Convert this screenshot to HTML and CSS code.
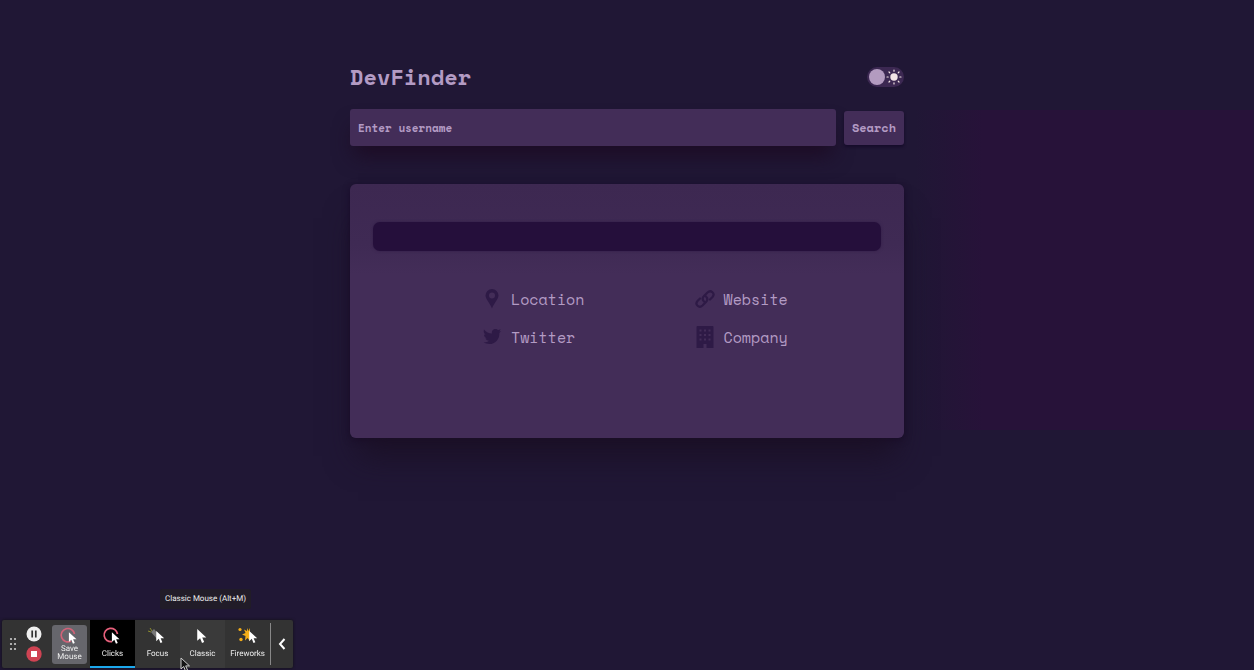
FILE: index.html
```html
<!DOCTYPE html>
<html lang="en">
<head>
<meta charset="utf-8">
<meta name="viewport" content="width=device-width, initial-scale=1">
<title>DevFinder</title>
<link rel="stylesheet" href="styles.css">
</head>
<body>
<svg class="defs" aria-hidden="true">
  <symbol id="arrow" viewBox="0 0 10 15"><path d="M1 1v11l2.700-2.500L5.500 14l2-.9-1.800-4.200H9.500z"/></symbol>
</svg>
<main class="finder">
  <header class="header">
    <h1 class="title">DevFinder</h1>
    <label class="theme">
      <input class="theme-input" type="checkbox" aria-label="Light theme">
      <svg class="sun" viewBox="0 0 16 16" aria-hidden="true"><circle cx="8" cy="8" r="3.700" fill="#f3e5e6"/><path d="M8 1v1.200M8 13.800V15M1 8h1.200M13.800 8H15M3 3l.8.8M12.200 12.200l.8.8M13 3l-.8.8M3.800 12.200l-.8.8" stroke="#f3e5e6" stroke-width="1.200" stroke-linecap="round"/></svg>
    </label>
  </header>
  <form class="search">
    <input class="search-input" type="text" placeholder="Enter username" aria-label="Enter username">
    <button class="search-button" type="button">Search</button>
  </form>
  <section class="card">
    <div class="stats"></div>
    <ul class="details">
      <li class="detail"><svg class="icon" viewBox="0 0 20 24" aria-hidden="true"><path fill-rule="evenodd" d="M10 2a6.500 6.500 0 0 0-6.500 6.500C3.500 12 8 16 10 21.500 12 16 16.500 12 16.500 8.500A6.500 6.500 0 0 0 10 2zm0 3.500a3 3 0 1 1 0 6 3 3 0 0 1 0-6z"/></svg>Location</li>
      <li class="detail"><svg class="icon" viewBox="0 0 20 24" aria-hidden="true"><g fill="none" stroke="#2e1a46" stroke-width="2.200" stroke-linecap="round"><path d="M9 14.500c-2-2-1.500-4 0-5.500l3.500-3.500c3.500-3.200 8 1 5 4.500L15 12.500"/><path d="M11 9.500c2 2 1.500 4 0 5.500l-3.500 3.500c-3.500 3.200-8-1-5-4.500L5 11.500"/></g></svg>Website</li>
      <li class="detail"><svg class="icon" viewBox="0 0 20 24" aria-hidden="true"><path d="M2 4.500c2.200 2.600 4.800 3.900 8 4.100-.6-2.700 1.200-4.600 3.500-4.600 1 0 2 .5 2.700 1.100L18.700 4.200l-1.400 2.200 1.800-.4-1.700 1.900c.3 6.500-4.400 11.100-9.900 11.100-2.300 0-4.300-.6-5.900-1.700 2 .2 3.900-.3 5.300-1.500-1.700-.1-2.900-1.100-3.400-2.600h1.500C3.200 12.700 2 11.300 2 9.400l1.600.4C2.100 8.600 1.200 6.500 2 4.500z"/></svg>Twitter</li>
      <li class="detail"><svg class="icon" viewBox="0 0 20 24" aria-hidden="true"><path d="M2.500 1h15q1 0 1 1v21h-7v-4h-3v4h-7V2q0-1 1-1z"/><path d="M4.500 5.500h2M9 5.500h2M13.500 5.500h2M4.500 10h2M9 10h2M13.500 10h2M4.500 14.500h2M9 14.500h2M13.500 14.500h2" stroke="#432d58" stroke-width="1.800"/></svg>Company</li>
    </ul>
  </section>
</main>

<aside class="recorder" aria-label="Recorder">
  <div class="tooltip" role="tooltip">Classic Mouse (Alt+M)</div>
  <svg class="grip" viewBox="0 0 8 14" fill="#ccc" aria-hidden="true"><circle cx="2" cy="2" r="1.100"/><circle cx="6" cy="2" r="1.100"/><circle cx="2" cy="7" r="1.100"/><circle cx="6" cy="7" r="1.100"/><circle cx="2" cy="12" r="1.100"/><circle cx="6" cy="12" r="1.100"/></svg>
  <div class="controls">
    <button class="control" type="button" aria-label="Pause"><svg viewBox="0 0 16 16"><circle cx="8" cy="8" r="7.500" fill="#f0f0f0"/><path d="M6.200 4.500v7M9.800 4.500v7" stroke="#333" stroke-width="1.700"/></svg></button>
    <button class="control" type="button" aria-label="Stop"><svg viewBox="0 0 16 16"><circle cx="8" cy="8" r="7.700" fill="#cf4353"/><path d="M5 5h6v6H5z" fill="#fff"/></svg></button>
  </div>
  <button class="save" type="button"><svg class="tool-icon" viewBox="0 0 22 18" aria-hidden="true"><path d="M12 14.100A6.700 6.700 0 1 1 15.500 7" fill="none" stroke="#d16278" stroke-width="1.600"/><use href="#arrow" x="9" y="4" width="9" height="14" fill="#fff"/></svg><span>Save Mouse</span></button>
  <button class="tool tool-active" type="button"><svg class="tool-icon" viewBox="0 0 22 18" aria-hidden="true"><path d="M10 14.600A6.700 6.700 0 1 1 15.500 7" fill="none" stroke="#e8607c" stroke-width="1.700"/><use href="#arrow" x="9" y="4" width="9" height="14" fill="#fff"/></svg>Clicks</button>
  <button class="tool" type="button"><svg class="tool-icon" viewBox="0 0 22 18" aria-hidden="true"><path d="M3 1l2 3M1 4l3 1" stroke="#8c8c2e"/><path d="M4 5l3-3 6 7-3 3z" fill="#777"/><use href="#arrow" x="8" y="3" width="10" height="14" fill="#fff"/></svg>Focus</button>
  <button class="tool tool-hover" type="button"><svg class="tool-icon" viewBox="0 0 22 18" aria-hidden="true"><use href="#arrow" x="4" y="1" width="11" height="16" fill="#fff"/></svg>Classic</button>
  <button class="tool" type="button"><svg class="tool-icon" viewBox="0 0 22 18" aria-hidden="true"><path d="M10 1l1.500 3L13 1v13l-2.500-3L8 13.500 8.500 9 5 7.500 8.500 6 7 2.500l3 1.500z" fill="#f4ae18"/><g fill="#f4ae18"><circle cx="3" cy="2.500" r="1.600"/><circle cx="4" cy="12.500" r="1.700"/></g><use href="#arrow" x="11" y="3" width="10" height="14" fill="#fff"/></svg>Fireworks</button>
  <button class="collapse" type="button" aria-label="Collapse"><svg viewBox="0 0 10 14"><path d="M7.500 2L3 7l4.500 5" fill="none" stroke="#fff" stroke-width="2"/></svg></button>
  <svg class="pointer" viewBox="0 0 10 15" aria-hidden="true"><use href="#arrow" width="10" height="15" fill="#151515" stroke="#ccc"/></svg>
</aside>
</body>
</html>
```

FILE: styles.css
```css
* { box-sizing: border-box; }

body {
  margin: 0;
  min-height: 100vh;
  padding: 60px 24px 100px;
  color: #b39bc4;
  background: #201735 linear-gradient(90deg, transparent, #271239 20%) right 110px / 27% 320px no-repeat;
  font-family: "Space Mono", "DejaVu Sans Mono", monospace;
}

button, input { font: inherit; color: inherit; }

button {
  border: 0;
  padding: 0;
  background: none;
}

svg { display: block; }

.defs {
  position: absolute;
  width: 0;
  height: 0;
}

.finder {
  max-width: 554px;
  margin: 0 auto;
}

.header {
  display: flex;
  align-items: center;
  justify-content: space-between;
}

.title {
  margin: 0;
  font-size: 22px;
  line-height: 34px;
}

.theme {
  display: flex;
  align-items: center;
  gap: 1px;
  padding: 2px;
  border-radius: 10px;
  background: #3c2852;
}

.theme-input {
  appearance: none;
  width: 16px;
  height: 16px;
  margin: 0;
  border-radius: 50%;
  background: #b39bc0;
}

.sun {
  width: 16px;
  height: 16px;
}

.search {
  display: flex;
  align-items: center;
  gap: 8px;
  margin-top: 15px;
  font-size: 12px;
  font-weight: 700;
}

.search-input {
  flex: 1;
  min-width: 0;
  height: 37px;
  padding: 0 8px;
  border: 0;
  border-radius: 3px;
  background: #432d58;
  box-shadow: 0 14px 20px -4px #1d0c25;
  font-size: 11px;
}

.search-input::placeholder {
  color: #b39bc4;
  opacity: 1;
}

.search-button {
  height: 34px;
  padding: 0 8px;
  border-radius: 3px;
  background: #432d58;
  box-shadow: 0 2px 3px #150b2a;
}

.card {
  margin-top: 38px;
  padding: 38px 23px 89px;
  border-radius: 6px;
  background: linear-gradient(#3d2851, #3f2a54 60px, #432d58 90px);
  box-shadow: 0 26px 30px -8px #1b1026, 0 2px 7px #180b2a;
}

.stats {
  height: 29px;
  border-radius: 7px;
  background: #250f3b;
  box-shadow: 0 0 3px #321d47;
}

.details {
  display: grid;
  grid-template-columns: 1fr 1fr;
  row-gap: 14px;
  margin: 36px 0 0;
  padding: 0 0 0 109px;
  list-style: none;
  font-size: 15px;
  line-height: 24px;
}

.detail {
  display: flex;
  align-items: center;
  gap: 9px;
}

.detail:nth-child(even) { padding-left: 13px; }

.icon {
  width: 20px;
  height: 24px;
  fill: #2e1a46;
}

.recorder {
  position: fixed;
  left: 2px;
  bottom: 2px;
  display: flex;
  align-items: center;
  height: 48px;
  border-radius: 2px;
  background: #333;
  box-shadow: 0 0 3px #111;
  color: #eee;
  font-family: Roboto, sans-serif;
  font-size: 8px;
  line-height: 8px;
  text-rendering: geometricPrecision;
}

.recorder button { text-rendering: inherit; }

.grip {
  width: 8px;
  height: 14px;
  margin: 0 9px 0 7px;
}

.controls {
  display: grid;
  gap: 4px;
  margin-right: 10px;
}

.control {
  width: 16px;
  height: 16px;
}

.save {
  display: flex;
  flex-direction: column;
  align-items: center;
  width: 35px;
  height: 39px;
  margin-right: 3px;
  padding-top: 2px;
  border-radius: 3px;
  background: #66666c;
}

.tool-icon {
  width: 22px;
  height: 18px;
}

.tool {
  display: flex;
  flex-direction: column;
  align-items: center;
  gap: 5px;
  width: 45px;
  height: 48px;
  padding-top: 7px;
  border-bottom: 2px solid transparent;
}

.tool-active {
  border-color: #1ca8ed;
  background: #000;
}

.tool-hover { background: #3a3a3a; }

.collapse {
  width: 23px;
  height: 42px;
  padding-left: 6px;
  border-left: 1px solid #888;
}

.collapse svg {
  width: 10px;
  height: 14px;
}

.tooltip {
  position: absolute;
  bottom: 59px;
  left: 158px;
  padding: 6px 5px;
  border-radius: 2px;
  background: #211c28;
  white-space: nowrap;
}

.pointer {
  position: absolute;
  left: 178px;
  top: 37px;
  width: 10px;
  height: 15px;
}
```
